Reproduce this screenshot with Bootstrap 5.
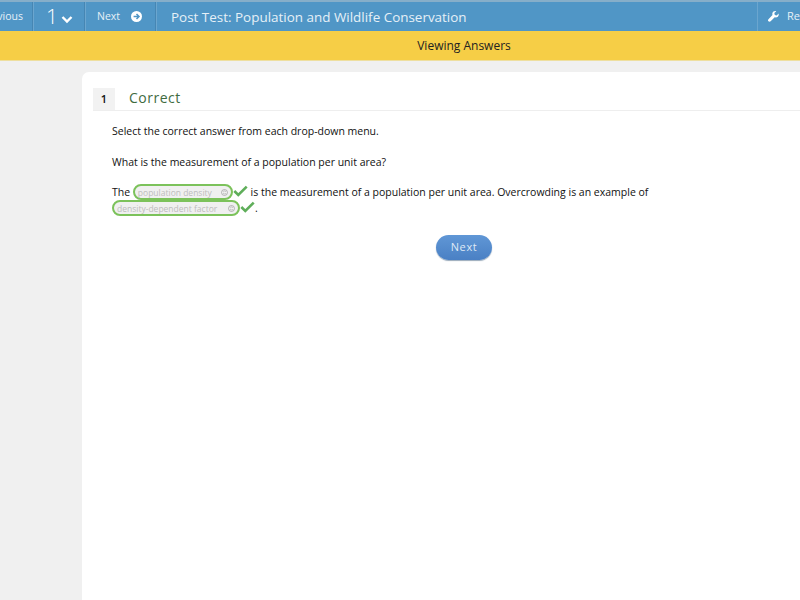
<!DOCTYPE html>
<html lang="en">
<head>
  <meta charset="UTF-8">
  <meta name="viewport" content="width=device-width, initial-scale=1.0">
  <title>Post Test: Population and Wildlife Conservation</title>
  <link href="https://cdn.jsdelivr.net/npm/bootstrap@5.3.0/dist/css/bootstrap.min.css" rel="stylesheet">
  <style>
    html, body { overflow: hidden; height: 600px; }
    body { background: #f0f0f0; font-family: "Open Sans", sans-serif; color: #111; }
    .page-wrap { width: 928px; }

    .top-bar { height: 31px; background: #5096c6; border-top: 2px solid #86aec9; color: #e6f0f7; }
    .bar-btn { height: 29px; display: flex; align-items: center; border-right: 1px solid #4686b3; box-shadow: 1px 0 0 #6ba6cf; font-size: 10.5px; }
    .btn-prev { width: 33px; justify-content: flex-end; padding-right: 9px; overflow: hidden; white-space: nowrap; }
    .btn-num { width: 51px; padding-left: 12px; margin-left: 1px; font-size: 21px; font-weight: 300; gap: 3px; color: #fff; }
    .btn-num svg { margin-top: 6px; }
    .btn-next { width: 70px; padding-left: 11px; gap: 11px; margin-left: 1px; }
    .bar-title { font-size: 13.45px; padding: 2px 0 0 15px; }
    .btn-tools { width: 171px; margin-left: auto; padding-left: 10px; gap: 8px; border-right: 0; border-left: 1px solid #6ba6cf; box-shadow: none; font-size: 11px; }

    .answer-bar { height: 30px; background: #f6ce46; border-bottom: 1px solid #eedf9f; font-size: 12px; color: #222; }

    .sheet { width: 764px; height: 528px; margin: 11px 0 0 82px; background: #fff; border-radius: 7px 7px 0 0; padding-top: 16px; }
    .q-head { margin-left: 11px; height: 23px; border-bottom: 1px solid #eeeeee; }
    .q-num { width: 22px; height: 22px; background: #f2f2f2; font-size: 11px; font-weight: 600; }
    .q-status { margin-left: 14px; margin-top: -1px; font-size: 14px; letter-spacing: .5px; color: #3f6b3f; }
    .q-body { padding: 12px 30px 0; font-size: 10.5px; line-height: 16px; }
    .q-body p { margin: 0 0 15px; }
    .q-body p.answer-line { max-width: 640px; margin: -1px 0 0; }

    .pick { display: inline-flex; align-items: center; justify-content: space-between; height: 16px; padding: 0 3px 0 3px; border: 2px solid #7cc25b; border-radius: 8px; background: #f0f0f0; color: #bdbdbd; font-size: 8.5px; line-height: 9px; white-space: nowrap; vertical-align: top; }
    .pick-a { width: 100px; }
    .pick-b { width: 128px; }
    .tick { vertical-align: top; margin-top: 1px; }

    .next-btn { width: 56px; height: 25px; margin-top: 19px; padding: 0; border: 0; border-radius: 13px; background: linear-gradient(#6097d6, #4a80c4); box-shadow: 0 1px 1px #9ab; color: #dfe9f5; font-size: 11px; letter-spacing: .6px; }
  </style>
</head>
<body>
<div class="page-wrap">
  <div class="top-bar d-flex">
    <div class="bar-btn btn-prev">Previous</div>
    <div class="bar-btn btn-num">1
      <svg width="12" height="9" viewBox="0 0 12 9"><path d="M1.5 2 6 6.5 10.5 2" fill="none" stroke="#fff" stroke-width="2.4"/></svg>
    </div>
    <div class="bar-btn btn-next">Next
      <svg width="11" height="11" viewBox="0 0 12 12"><circle cx="6" cy="6" r="6" fill="#fff"/><path d="M2.8 6H8M6 3.3 8.7 6 6 8.7" fill="none" stroke="#5096c6" stroke-width="1.7"/></svg>
    </div>
    <div class="bar-title d-flex align-items-center">Post Test: Population and Wildlife Conservation</div>
    <div class="bar-btn btn-tools">
      <svg width="11" height="11" viewBox="0 0 12 12"><path d="M11.6 2.7 9.5 4.8 7.4 4.3 6.9 2.3 9 .3C7.2-.3 5.2.6 4.8 2.4c-.2.7-.1 1.4.1 2L.5 8.9c-.7.7-.7 1.7 0 2.4s1.7.7 2.4 0l4.4-4.4c2.4.8 4.9-1.2 4.3-3.9z" fill="#fff"/></svg>
      Reader Tools
    </div>
  </div>
  <div class="answer-bar d-flex align-items-center justify-content-center">Viewing Answers</div>

  <div class="sheet">
    <div class="q-head d-flex">
      <div class="q-num d-flex align-items-center justify-content-center">1</div>
      <div class="q-status">Correct</div>
    </div>
    <div class="q-body">
      <p>Select the correct answer from each drop-down menu.</p>
      <p>What is the measurement of a population per unit area?</p>
      <p class="answer-line">The
        <span class="pick pick-a">population density
          <svg width="7" height="7" viewBox="0 0 8 8"><circle cx="4" cy="4" r="3.4" fill="none" stroke="#999" stroke-width=".8"/><path d="M2.6 3.4 4 2l1.4 1.4M2.6 4.6 4 6l1.4-1.4" fill="none" stroke="#999" stroke-width=".7"/></svg>
        </span><svg class="tick" width="15" height="12" viewBox="0 0 15 12"><path d="M1.3 6 5.3 10 13.7 1.6" fill="none" stroke="#5fae5a" stroke-width="2.6"/></svg>
        is the measurement of a population per unit area. Overcrowding is an example of
        <span class="pick pick-b">density-dependent factor
          <svg width="7" height="7" viewBox="0 0 8 8"><circle cx="4" cy="4" r="3.4" fill="none" stroke="#999" stroke-width=".8"/><path d="M2.6 3.4 4 2l1.4 1.4M2.6 4.6 4 6l1.4-1.4" fill="none" stroke="#999" stroke-width=".7"/></svg>
        </span><svg class="tick" width="15" height="12" viewBox="0 0 15 12"><path d="M1.3 6 5.3 10 13.7 1.6" fill="none" stroke="#5fae5a" stroke-width="2.6"/></svg>.
      </p>
      <div class="text-center">
        <button type="button" class="btn next-btn">Next</button>
      </div>
    </div>
  </div>
</div>
<script src="https://cdn.jsdelivr.net/npm/bootstrap@5.3.0/dist/js/bootstrap.bundle.min.js"></script>
</body>
</html>
